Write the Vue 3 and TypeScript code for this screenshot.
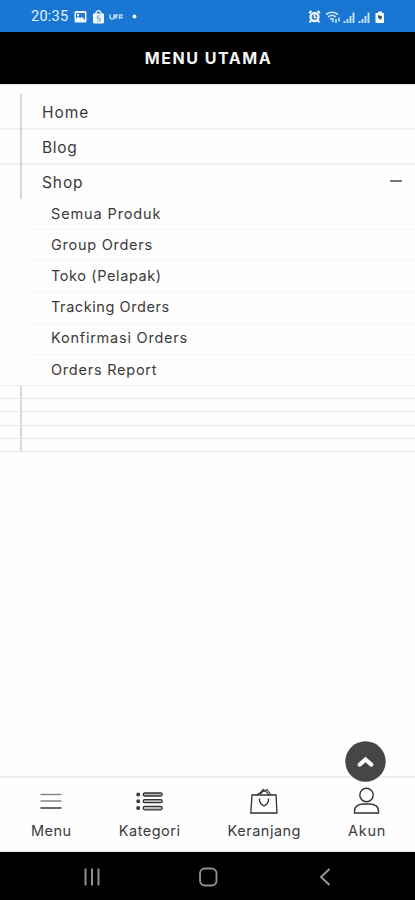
<script setup lang="ts">
import { ref } from 'vue'

interface Entry { label: string; spacing: number }

const main: Entry[] = [
  { label: 'Home', spacing: 0.95 },
  { label: 'Blog', spacing: 0.7 },
  { label: 'Shop', spacing: 0.9 },
]
const products: Entry[] = [
  { label: 'Semua Produk', spacing: 0.88 },
  { label: 'Group Orders', spacing: 0.74 },
  { label: 'Toko (Pelapak)', spacing: 0.6 },
  { label: 'Tracking Orders', spacing: 0.57 },
  { label: 'Konfirmasi Orders', spacing: 0.77 },
  { label: 'Orders Report', spacing: 0.76 },
]
const open = ref(true)
</script>

<template>
  <div class="screen">
    <div class="status">
      <span class="time">20:35</span>
      <svg class="left-icons" width="66" height="16" viewBox="0 0 66 16">
        <rect x="0.5" y="2" width="12" height="11.5" rx="1.5" fill="#eef6ff" />
        <path d="M2 4h9v7l-3-3-2 1-2-1.500-2 2z" fill="#327bc9" />
        <path d="M3 5h2v2H3z" fill="#eef6ff" />
        <path d="M19 4.500h11V13q0 1.500-1.500 1.500h-8q-1.500 0-1.500-1.500z" fill="#eef6ff" />
        <path d="M22 5.500V3.500q2.500-3.500 5 0v2" fill="none" stroke="#eef6ff" stroke-width="1.300" />
        <path d="M26.500 7h-3v2.500h2.500V12h-3" fill="none" stroke="#8aa5bd" stroke-width="1.200" />
        <path d="M36 5.500v2.500q0 2 2 2t2-2V5.500M41.500 10V6H44M41.500 8h2M45.500 10V6H49M45.500 8.500H49" fill="none" stroke="#b9d9f7" stroke-width="1.500" />
        <circle cx="60.500" cy="7.500" r="1.900" fill="#fff" />
      </svg>
      <svg class="right-icons" width="80" height="16" viewBox="0 0 80 16">
        <circle cx="8.500" cy="8" r="4" fill="#3d83cc" stroke="#f4faff" stroke-width="2.300" />
        <path d="M3 4l2.500-2M11.500 2L14 4M5 11.500l-1.500 2M12 11.500l1.500 2" stroke="#f4faff" stroke-width="2" />
        <path d="M8.500 5.500v3h2" fill="none" stroke="#fff" stroke-width="1.200" />
        <g fill="none" stroke="#c5e4f4" stroke-width="1.600">
          <path d="M20 5.500q6-4.500 12 0M22 8q4-3.500 8 0M24 10.500q2-2 4 0" />
          <path d="M26 11l1.500 2M30 10v4M33 8.500v4" />
          <path d="M38.500 12v2M41.500 10v4M44.500 7v7M47.500 3.500v10.500" stroke-width="1.900" />
          <path d="M53.500 12v2M56.500 10v4M59.500 7v7M62.500 3.500v10.500" stroke-width="1.900" />
        </g>
        <path d="M69.500 4H72V2.500h4V4h2v10h-8.500z" fill="#f4faff" />
        <path d="M72 6l4 1.500-1 3.500-3-2.500z" fill="#344f68" />
      </svg>
    </div>
    <header class="header"><h1>MENU UTAMA</h1></header>

    <main class="content">
      <ul class="main-list">
        <li v-for="item in main" :key="item.label">
          <span :style="{ letterSpacing: item.spacing + 'px' }">{{ item.label }}</span>
          <button v-if="item.label === 'Shop'" class="toggle" aria-label="Shop" @click="open = !open"></button>
        </li>
      </ul>
      <ul v-show="open" class="sub-list">
        <li v-for="item in products" :key="item.label">
          <span :style="{ letterSpacing: item.spacing + 'px' }">{{ item.label }}</span>
        </li>
      </ul>
      <div class="empty-list"><i v-for="n in 5" :key="n"></i></div>
    </main>

    <footer class="tabs">
      <button class="top" aria-label="Top">
        <svg width="42" height="42" viewBox="0 0 42 42">
          <circle cx="20.500" cy="20.500" r="20.200" fill="#464646" />
          <path d="M14.800 23.500l5.700-5 5.700 5" fill="none" stroke="#fff" stroke-width="4.200" stroke-linecap="round" />
        </svg>
      </button>
      <a class="tab menu">
        <svg width="28" height="28" viewBox="0 0 28 28" fill="none" stroke-width="1.600">
          <path d="M3.500 7.500h21M3.500 14h21" stroke="#888" /><path d="M3.500 21h21" stroke="#444" />
        </svg>
        <span>Menu</span>
      </a>
      <a class="tab category">
        <svg width="28" height="28" viewBox="0 0 28 28" fill="#bbb" stroke="#333" stroke-width="1.300">
          <g fill="#555"><circle cx="2.200" cy="7.500" r="1.300" /><circle cx="2.200" cy="14.200" r="1.300" /><circle cx="2.200" cy="21" r="1.300" /></g>
          <rect x="7.200" y="6" width="19" height="3" rx="1.500" />
          <rect x="7.200" y="12.700" width="19" height="3" rx="1.500" />
          <rect x="7.200" y="19.300" width="19" height="3.500" rx="1.700" />
        </svg>
        <span>Kategori</span>
      </a>
      <a class="tab cart">
        <svg width="28" height="28" viewBox="0 0 28 28" fill="none" stroke="#333" stroke-width="1.300">
          <path d="M2 8h24l1 18H.8z" />
          <path d="M6.500 8l4-2.500L13 2.500 15 4l2-1.500L21 8M10 7l4-3.500 3 2L19 8" stroke-width="1.100" />
          <path d="M9.500 11.500v1.500q0 3.500 4.500 6 4.500-2.500 4.500-6v-1.500" stroke-width="1.400" />
        </svg>
        <span>Keranjang</span>
      </a>
      <a class="tab account">
        <svg width="28" height="28" viewBox="0 0 28 28" fill="none" stroke="#333" stroke-width="1.400">
          <circle cx="14" cy="8" r="6.700" />
          <path d="M2 26v-2q0-6.500 8.500-7h7q8.500.5 8.500 7v2z" />
        </svg>
        <span>Akun</span>
      </a>
    </footer>

    <nav class="system-nav">
      <svg width="20" height="20" viewBox="0 0 20 20"><path d="M3.500 1.500v17M10 1.500v17M16.500 1.500v17" stroke="#8f8f8f" stroke-width="2" /></svg>
      <svg width="20" height="20" viewBox="0 0 20 20"><rect x="1" y="1.500" width="16.500" height="17" rx="5" fill="none" stroke="#8f8f8f" stroke-width="1.900" /></svg>
      <svg width="20" height="20" viewBox="0 0 20 20"><path d="M14.500 2L6 10l8.500 8" fill="none" stroke="#999" stroke-width="1.900" /></svg>
    </nav>
  </div>
</template>

<style>
body { background: #fff; }
</style>

<style scoped>
* { box-sizing: border-box; }
.screen { width: 415px; height: 900px; display: flex; flex-direction: column; background: #fefefe; color: #3a3a3a; font-family: Inter, "Liberation Sans", sans-serif; }
.status { height: 32px; flex: none; background: #1976d3; display: flex; align-items: center; padding: 1px 29px 0 31px; }
.time { width: 43px; font: 14.500px Roboto, sans-serif; color: #e4f3ff; letter-spacing: .25px; }
.right-icons { margin-left: auto; }
.header { height: 53px; flex: none; background: #000; border-bottom: 1px solid #ddd; display: flex; align-items: center; justify-content: center; padding-left: 2px; }
h1 { margin: 0; color: #f6f6f6; font-size: 16px; line-height: 20px; font-weight: 650; letter-spacing: 1.550px; }
.content { flex: 1; }
ul { list-style: none; margin: 0; padding: 0; }
.main-list { margin-top: 9px; height: 105px; display: grid; grid-template-rows: 36px 35px 34px; background: linear-gradient(#d8d8d8, #d8d8d8) 20px 0 / 2px 100% no-repeat; }
.main-list li { display: flex; align-items: center; justify-content: space-between; padding: 2px 13px 0 42px; border-bottom: 2px solid rgba(0, 0, 0, .05); font-size: 15.500px; }
.main-list li:last-child { border: 0; padding-top: 0; }
.toggle { width: 12px; height: 2px; margin-top: -2px; padding: 0; border: 0; background: #777; }
.sub-list { height: 187px; display: grid; grid-template-rows: repeat(6, 31.170px); }
.sub-list li { display: flex; align-items: center; padding: 0 0 2px 21px; margin-left: 30px; border-bottom: 1px solid #f5f5f5; font-size: 14.500px; }
.sub-list li:last-child { margin-left: 0; padding: 0 0 1px 51px; border-bottom-color: #ededed; }
.empty-list { height: 66px; display: grid; grid-template-rows: repeat(5, 13.200px); background: linear-gradient(#d8d8d8, #d8d8d8) 20px 0 / 2px 100% no-repeat; }
.empty-list i { border-bottom: 1.500px solid #e9e9e9; }
.tabs { position: relative; height: 76px; flex: none; border-top: 2px solid #efefef; border-bottom: 1px solid #ddd; display: flex; align-items: flex-start; justify-content: space-between; padding: 9px 29px 0 31px; }
.tab { display: flex; flex-direction: column; align-items: center; gap: 6px; font-size: 14.500px; line-height: 20px; letter-spacing: .5px; }
.tab svg, .top svg { display: block; }
.account svg { transform: translateX(-.5px); }
.account { letter-spacing: .7px; }
.top { position: absolute; top: -37px; right: 28px; width: 42px; height: 42px; padding: 0; border: 0; background: transparent; }
.system-nav { height: 48px; flex: none; background: #000; display: flex; align-items: center; justify-content: space-between; padding: 2px 80px 0 82px; }
</style>
